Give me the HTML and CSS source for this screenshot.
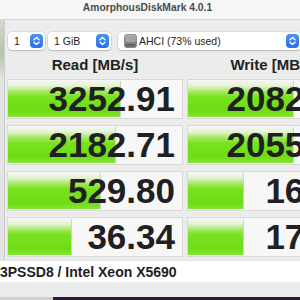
FILE: index.html
```html
<!DOCTYPE html>
<html lang="en">

<head>
  <meta name="viewport" content="width=device-width">
  <title>AmorphousDiskMark 4.0.1</title>
  <link rel="stylesheet" href="styles.css">
</head>

<body>
  <div class="window">
    <div class="titlebar">AmorphousDiskMark 4.0.1</div>

    <div class="toolbar">
      <div class="popup popup-count">
        <span class="label">1</span>
        <span class="stepper"><svg width="13" height="14" viewBox="0 0 13 14"><path d="M4 5.8 L6.5 3.4 L9 5.8 M4 8.2 L6.5 10.6 L9 8.2" fill="none" stroke="#fff" stroke-width="1.4" stroke-linecap="round" stroke-linejoin="round"/></svg></span>
      </div>
      <div class="popup popup-size">
        <span class="label">1 GiB</span>
        <span class="stepper"><svg width="13" height="14" viewBox="0 0 13 14"><path d="M4 5.8 L6.5 3.4 L9 5.8 M4 8.2 L6.5 10.6 L9 8.2" fill="none" stroke="#fff" stroke-width="1.4" stroke-linecap="round" stroke-linejoin="round"/></svg></span>
      </div>
      <div class="popup popup-disk">
        <svg class="disk" width="13" height="14" viewBox="0 0 13 14">
          <defs>
            <linearGradient id="hd" x1="0" y1="0" x2="0" y2="1">
              <stop offset="0" stop-color="#b8b8b8"/>
              <stop offset="0.55" stop-color="#8a8a8a"/>
              <stop offset="1" stop-color="#6c6c6c"/>
            </linearGradient>
          </defs>
          <rect x="0.5" y="0.5" width="12" height="13" rx="2" fill="url(#hd)" stroke="#666" stroke-width="0.6"/>
          <rect x="2" y="2" width="9" height="6" rx="1" fill="#a4a4a4"/>
          <rect x="2" y="10" width="9" height="1.6" rx="0.8" fill="#5a5a5a"/>
        </svg>
        <span class="label">AHCI (73% used)</span>
        <span class="stepper"><svg width="13" height="14" viewBox="0 0 13 14"><path d="M4 5.8 L6.5 3.4 L9 5.8 M4 8.2 L6.5 10.6 L9 8.2" fill="none" stroke="#fff" stroke-width="1.4" stroke-linecap="round" stroke-linejoin="round"/></svg></span>
      </div>
    </div>

    <div class="bench">
      <div class="side side-head"></div>
      <div class="head">Read [MB/s]</div>
      <div class="head">Write [MB/s]</div>

      <div class="side"></div>
      <div class="cell"><div class="bar" style="width: 112px"></div><div class="value">3252.91</div></div>
      <div class="cell"><div class="bar" style="width: 105px"></div><div class="value">2082.45</div></div>

      <div class="side"></div>
      <div class="cell"><div class="bar" style="width: 107px"></div><div class="value">2182.71</div></div>
      <div class="cell"><div class="bar" style="width: 105px"></div><div class="value">2055.71</div></div>

      <div class="side"></div>
      <div class="cell"><div class="bar" style="width: 92px"></div><div class="value">529.80</div></div>
      <div class="cell"><div class="bar" style="width: 55px"></div><div class="value">16.23</div></div>

      <div class="side"></div>
      <div class="cell"><div class="bar" style="width: 63px"></div><div class="value">36.34</div></div>
      <div class="cell"><div class="bar" style="width: 55px"></div><div class="value">17.68</div></div>
    </div>

    <div class="comment">3PSSD8 / Intel Xeon X5690</div>
  </div>
  <div class="desktop"></div>
</body>

</html>
```

FILE: styles.css
```css
html,
body {
  margin: 0;
  width: 300px;
  height: 300px;
  overflow: hidden;
}

body {
  background: #ececec;
  font-family: "Liberation Sans", Arial, sans-serif;
  color: #222;
  display: flex;
  flex-direction: column;
}

.window {
  flex: 1;
  display: flex;
  flex-direction: column;
}

.titlebar {
  height: 19px;
  line-height: 16px;
  border-bottom: 1px solid #d6d6d6;
  background: #f6f6f6;
  text-align: center;
  padding-right: 5px;
  font-size: 10.3px;
  font-weight: bold;
  color: #4c4c4c;
}

.toolbar {
  display: flex;
  padding: 12px 0 0 8px;
  height: 18px;
}

.popup {
  display: flex;
  align-items: center;
  height: 18px;
  box-sizing: border-box;
  padding: 0 2px 0 6px;
  background: #fff;
  border-radius: 4px;
  box-shadow: 0 0 0 0.5px rgba(0, 0, 0, 0.12), 0 1px 1.5px rgba(0, 0, 0, 0.18);
  font-size: 10.5px;
  color: #1e1e1e;
  flex: none;
}

.popup .label {
  flex: 1;
  white-space: nowrap;
}

.popup-count {
  width: 37px;
}

.popup-size {
  width: 63px;
  margin-left: 3px;
}

.popup-disk {
  width: 183px;
  margin-left: 7px;
}

.disk {
  display: block;
  margin-right: 2px;
}

.stepper {
  display: block;
  width: 13px;
  height: 14px;
  border-radius: 4px;
  background: linear-gradient(#4a93f8, #2370ee);
}

.stepper svg {
  display: block;
}

.bench {
  display: grid;
  grid-template-columns: 5px 176px 176px;
  grid-template-rows: 16px repeat(4, 40px);
  column-gap: 2px;
  row-gap: 6px;
  margin-top: 7px;
}

.side {
  background: #e3e3e3;
  border-right: 1px solid #cacaca;
  margin: -3px 0;
}

.side-head {
  margin-top: -37px;
  background: linear-gradient(#d2d8cc, #b3c4a6 60%, #dde0da);
}

.head {
  font-size: 15px;
  font-weight: bold;
  line-height: 16px;
  text-align: center;
  white-space: nowrap;
}

.head + .head,
.cell + .cell {
  margin-left: 2px;
}

.cell {
  display: grid;
  box-sizing: border-box;
  padding: 1px 0 1px 0;
  border: 1px solid #d8d8d8;
  background: #f7f7f7;
}

.bar {
  grid-area: 1 / 1;
  justify-self: start;
  background: linear-gradient(#f3f7ef 0%, #e2f3d2 14%, #a3e85e 30%, #79e220 44%, #6fdc14 82%, #86e33a 100%);
  border-right: 1px solid #c9d8bd;
}

.value {
  grid-area: 1 / 1;
  justify-self: end;
  align-self: center;
  padding-right: 7px;
  font-size: 35px;
  font-weight: bold;
  line-height: 36px;
  color: #202020;
  white-space: nowrap;
}

.comment {
  margin-top: 3px;
  height: 22px;
  line-height: 22px;
  background: #fff;
  border-top: 1px solid #e2e2e2;
  box-sizing: border-box;
  font-size: 14px;
  font-weight: bold;
  color: #1e1e1e;
  white-space: nowrap;
}

.desktop {
  height: 3px;
  background: linear-gradient(to right, #cfcfcf 53px, #2b1b3d 53px);
}
```
